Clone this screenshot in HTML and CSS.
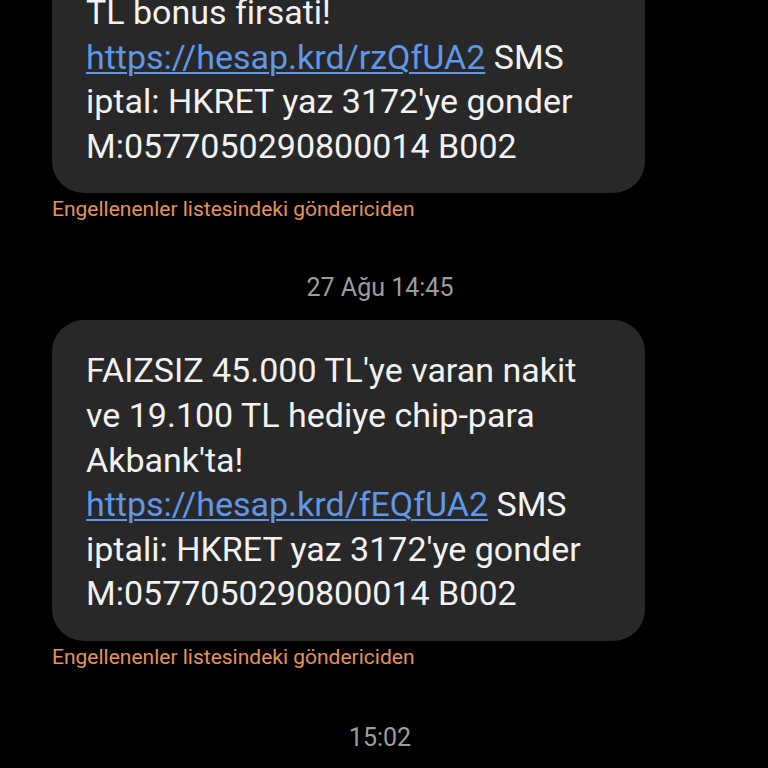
FILE: index.html
```html
<!DOCTYPE html>
<html lang="tr">
<head>
<meta charset="utf-8">
<link rel="stylesheet" href="styles.css">
</head>
<body>
<div class="thread">
  <div class="msg">
    <div class="bubble first">
      <p>TL bonus firsati!<br><a class="link" href="#">https://hesap.krd/rzQfUA2</a> SMS<br>iptal: HKRET yaz 3172'ye gonder<br>M:0577050290800014 B002</p>
    </div>
    <div class="note">Engellenenler listesindeki göndericiden</div>
  </div>
  <div class="stamp">27 Ağu 14:45</div>
  <div class="msg">
    <div class="bubble">
      <p>FAIZSIZ 45.000 TL'ye varan nakit<br>ve 19.100 TL hediye chip-para<br>Akbank'ta!<br><a class="link" href="#">https://hesap.krd/fEQfUA2</a> SMS<br>iptali: HKRET yaz 3172'ye gonder<br>M:0577050290800014 B002</p>
    </div>
    <div class="note">Engellenenler listesindeki göndericiden</div>
  </div>
  <div class="stamp last">15:02</div>
</div>
</body>
</html>
```
FILE: styles.css
```css
html, body {
  margin: 0;
  padding: 0;
  background: #000;
  width: 768px;
  height: 768px;
  overflow: hidden;
}
.thread {
  font-family: Roboto, "Liberation Sans", sans-serif;
  display: flex;
  flex-direction: column;
  margin-top: -38px;
}
.msg {
  display: flex;
  flex-direction: column;
  align-items: flex-start;
  padding-left: 52px;
}
.bubble {
  background: #282828;
  border-radius: 32px;
  padding: 28px 0 25px 34px;
  width: 559px;
}
.bubble p {
  margin: 0;
  color: #f2f2f2;
  font-size: 34px;
  line-height: 44.6px;
  white-space: nowrap;
}
.link {
  color: #5f98e8;
  text-decoration: underline;
  text-underline-offset: 3px;
  text-decoration-thickness: 2px;
}
.note {
  color: #e2935c;
  font-size: 21px;
  line-height: 24px;
  margin-top: 4px;
}
.stamp {
  color: #9c9c9c;
  font-size: 25px;
  line-height: 28px;
  text-align: center;
  margin-top: 53px;
  padding-right: 8px;
}
.stamp.last {
  margin-top: 55px;
}
.stamp + .msg {
  margin-top: 18px;
}
```
